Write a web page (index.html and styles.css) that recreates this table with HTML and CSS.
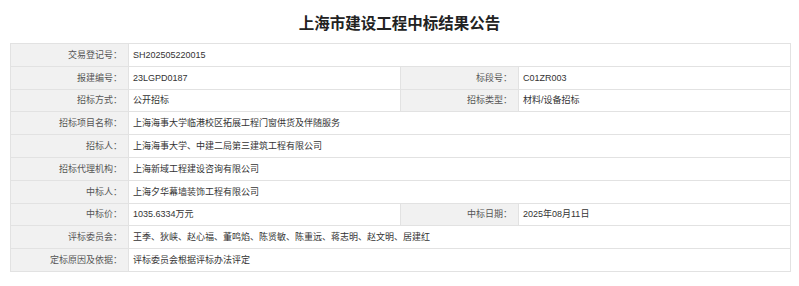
FILE: index.html
```html
<!DOCTYPE html>
<html lang="zh-CN">
<head>
<meta charset="utf-8">
<title>上海市建设工程中标结果公告</title>
<link rel="stylesheet" href="styles.css">
</head>
<body>
<div class="card">
  <h1 class="title">上海市建设工程中标结果公告</h1>
  <table class="info">
    <colgroup>
      <col class="c-label"><col class="c-value"><col class="c-label"><col class="c-value">
    </colgroup>
    <tbody>
      <tr><th>交易登记号：</th><td colspan="3">SH202505220015</td></tr>
      <tr><th>报建编号：</th><td>23LGPD0187</td><th>标段号：</th><td>C01ZR003</td></tr>
      <tr><th>招标方式：</th><td>公开招标</td><th>招标类型：</th><td>材料/设备招标</td></tr>
      <tr><th>招标项目名称：</th><td colspan="3">上海海事大学临港校区拓展工程门窗供货及伴随服务</td></tr>
      <tr><th>招标人：</th><td colspan="3">上海海事大学、中建二局第三建筑工程有限公司</td></tr>
      <tr><th>招标代理机构：</th><td colspan="3">上海新域工程建设咨询有限公司</td></tr>
      <tr><th>中标人：</th><td colspan="3">上海夕华幕墙装饰工程有限公司</td></tr>
      <tr><th>中标价：</th><td>1035.6334万元</td><th>中标日期：</th><td>2025年08月11日</td></tr>
      <tr><th>评标委员会：</th><td colspan="3">王季、狄峡、赵心福、董鸣焰、陈贤敏、陈重远、蒋志明、赵文明、居建红</td></tr>
      <tr><th>定标原因及依据：</th><td colspan="3">评标委员会根据评标办法评定</td></tr>
    </tbody>
  </table>
</div>
</body>
</html>
```

FILE: styles.css
```css
html, body {
  margin: 0;
  padding: 0;
  background: #ffffff;
}

body {
  font-family: "Liberation Sans", "Noto Sans CJK SC", sans-serif;
  color: #333333;
}

.card {
  width: 799px;
  height: 286px;
  box-sizing: border-box;
  padding: 0 10px;
  border-radius: 8px;
}

.title {
  margin: 0;
  padding-top: 12px;
  height: 31px;
  box-sizing: border-box;
  font-size: 15.5px;
  line-height: 20px;
  font-weight: bold;
  text-align: center;
  color: #222222;
  font-family: "Noto Sans CJK SC", sans-serif;
  margin-bottom: 12px;
}

.info {
  width: 779px;
  border-collapse: collapse;
  table-layout: fixed;
  font-size: 9px;
}

.c-label { width: 118px; }
.c-value { width: 272px; }

.info tr { height: 22.8px; }

.info th,
.info td {
  border: 1px solid #e2e2e2;
  padding: 0;
  line-height: 12px;
  white-space: nowrap;
}

.info th {
  background: #f1f1f1;
  color: #555555;
  font-weight: normal;
  text-align: right;
  padding-right: 6px;
}

.info td {
  background: #ffffff;
  color: #333333;
  text-align: left;
  padding-left: 4px;
}
```
